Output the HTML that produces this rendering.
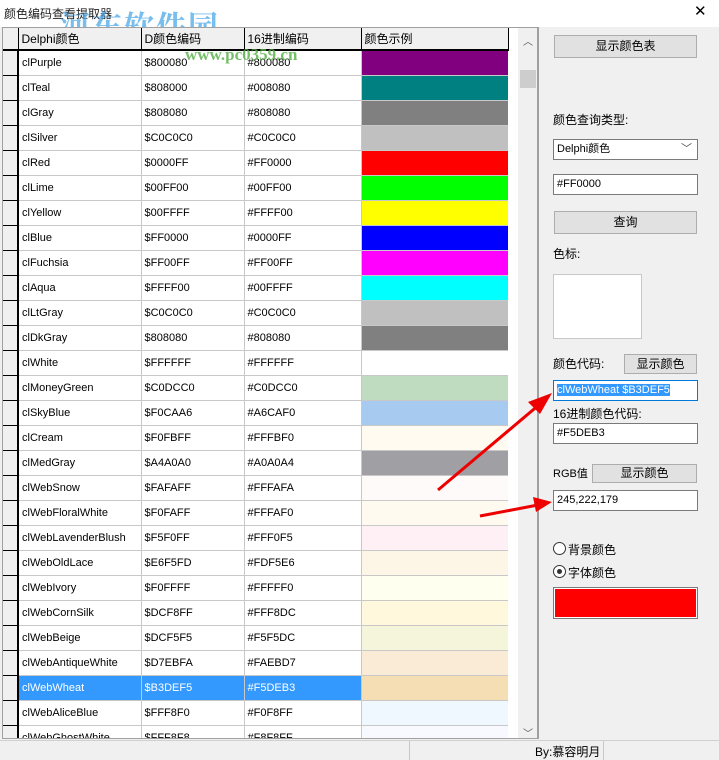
<!DOCTYPE html>
<html><head><meta charset="utf-8"><style>
*{margin:0;padding:0;box-sizing:border-box}
body{width:719px;height:760px;background:#f0f0f0;font-family:"Liberation Sans","Noto Sans CJK SC",sans-serif;font-size:11px;color:#000;position:relative;overflow:hidden}
.a{position:absolute}
#top{left:0;top:0;width:719px;height:27px;background:#fff}
#grid{left:2px;top:27px;width:536px;height:712px;border:1px solid #a0a0a0;background:#fff;overflow:hidden}
table{border-collapse:collapse;position:absolute;left:0;top:0;table-layout:fixed}
td{height:25px;border-right:1px solid #c8c8c8;border-bottom:1px solid #c8c8c8;padding:0 0 0 3px;white-space:nowrap;overflow:hidden;font-size:11px}
td.i{background:#f0f0f0;border-right:2px solid #000;border-bottom:1px solid #000;padding:0}
td.c{padding:0;border-right:none}
tr.h td{background:#f0f0f0;border-right:1px solid #000;border-bottom:2px solid #000;font-size:12px;height:22px}
tr.s td{background:#3399ff;color:#fff}
#sb{left:518px;top:28px;width:19px;height:710px;background:#f0f0f0}
.btn{position:absolute;background:#e1e1e1;border:1px solid #adadad;text-align:center;font-size:12px}
.inp{position:absolute;background:#fff;border:1px solid #7a7a7a;font-size:11px;padding-left:3px}
.lb{position:absolute;font-size:12px}
</style></head><body>
<div class="a" id="top"></div>
<div class="a" style="left:4px;top:5px;font-size:12px;color:#222">颜色编码查看提取器</div>
<div class="a" style="left:694px;top:2px;font-size:15px">✕</div>
<div class="a" style="left:60px;top:2px;font-size:30px;font-weight:bold;color:#4aa8e8;opacity:.75;font-family:'Noto Serif CJK SC',serif;letter-spacing:2px">河东软件园</div>
<div class="a" id="grid">
<table>
<colgroup><col style="width:15px"><col style="width:123px"><col style="width:103px"><col style="width:117px"><col style="width:147px"></colgroup>
<tr class="h"><td class="i" style="border-bottom:2px solid #000"></td><td>Delphi颜色</td><td>D颜色编码</td><td>16进制编码</td><td>颜色示例</td></tr>
<tr><td class="i"></td><td>clPurple</td><td>$800080</td><td>#800080</td><td class="c" style="background:#800080"></td></tr>
<tr><td class="i"></td><td>clTeal</td><td>$808000</td><td>#008080</td><td class="c" style="background:#008080"></td></tr>
<tr><td class="i"></td><td>clGray</td><td>$808080</td><td>#808080</td><td class="c" style="background:#808080"></td></tr>
<tr><td class="i"></td><td>clSilver</td><td>$C0C0C0</td><td>#C0C0C0</td><td class="c" style="background:#C0C0C0"></td></tr>
<tr><td class="i"></td><td>clRed</td><td>$0000FF</td><td>#FF0000</td><td class="c" style="background:#FF0000"></td></tr>
<tr><td class="i"></td><td>clLime</td><td>$00FF00</td><td>#00FF00</td><td class="c" style="background:#00FF00"></td></tr>
<tr><td class="i"></td><td>clYellow</td><td>$00FFFF</td><td>#FFFF00</td><td class="c" style="background:#FFFF00"></td></tr>
<tr><td class="i"></td><td>clBlue</td><td>$FF0000</td><td>#0000FF</td><td class="c" style="background:#0000FF"></td></tr>
<tr><td class="i"></td><td>clFuchsia</td><td>$FF00FF</td><td>#FF00FF</td><td class="c" style="background:#FF00FF"></td></tr>
<tr><td class="i"></td><td>clAqua</td><td>$FFFF00</td><td>#00FFFF</td><td class="c" style="background:#00FFFF"></td></tr>
<tr><td class="i"></td><td>clLtGray</td><td>$C0C0C0</td><td>#C0C0C0</td><td class="c" style="background:#C0C0C0"></td></tr>
<tr><td class="i"></td><td>clDkGray</td><td>$808080</td><td>#808080</td><td class="c" style="background:#808080"></td></tr>
<tr><td class="i"></td><td>clWhite</td><td>$FFFFFF</td><td>#FFFFFF</td><td class="c" style="background:#FFFFFF"></td></tr>
<tr><td class="i"></td><td>clMoneyGreen</td><td>$C0DCC0</td><td>#C0DCC0</td><td class="c" style="background:#C0DCC0"></td></tr>
<tr><td class="i"></td><td>clSkyBlue</td><td>$F0CAA6</td><td>#A6CAF0</td><td class="c" style="background:#A6CAF0"></td></tr>
<tr><td class="i"></td><td>clCream</td><td>$F0FBFF</td><td>#FFFBF0</td><td class="c" style="background:#FFFBF0"></td></tr>
<tr><td class="i"></td><td>clMedGray</td><td>$A4A0A0</td><td>#A0A0A4</td><td class="c" style="background:#A0A0A4"></td></tr>
<tr><td class="i"></td><td>clWebSnow</td><td>$FAFAFF</td><td>#FFFAFA</td><td class="c" style="background:#FFFAFA"></td></tr>
<tr><td class="i"></td><td>clWebFloralWhite</td><td>$F0FAFF</td><td>#FFFAF0</td><td class="c" style="background:#FFFAF0"></td></tr>
<tr><td class="i"></td><td>clWebLavenderBlush</td><td>$F5F0FF</td><td>#FFF0F5</td><td class="c" style="background:#FFF0F5"></td></tr>
<tr><td class="i"></td><td>clWebOldLace</td><td>$E6F5FD</td><td>#FDF5E6</td><td class="c" style="background:#FDF5E6"></td></tr>
<tr><td class="i"></td><td>clWebIvory</td><td>$F0FFFF</td><td>#FFFFF0</td><td class="c" style="background:#FFFFF0"></td></tr>
<tr><td class="i"></td><td>clWebCornSilk</td><td>$DCF8FF</td><td>#FFF8DC</td><td class="c" style="background:#FFF8DC"></td></tr>
<tr><td class="i"></td><td>clWebBeige</td><td>$DCF5F5</td><td>#F5F5DC</td><td class="c" style="background:#F5F5DC"></td></tr>
<tr><td class="i"></td><td>clWebAntiqueWhite</td><td>$D7EBFA</td><td>#FAEBD7</td><td class="c" style="background:#FAEBD7"></td></tr>
<tr class="s"><td class="i" style="background:#f0f0f0"></td><td>clWebWheat</td><td>$B3DEF5</td><td>#F5DEB3</td><td class="c" style="background:#F5DEB3"></td></tr>
<tr><td class="i"></td><td>clWebAliceBlue</td><td>$FFF8F0</td><td>#F0F8FF</td><td class="c" style="background:#F0F8FF"></td></tr>
<tr><td class="i"></td><td>clWebGhostWhite</td><td>$FFF8F8</td><td>#F8F8FF</td><td class="c" style="background:#F8F8FF"></td></tr>
</table>
</div>
<div class="a" id="sb"></div>
<div class="a" style="left:523px;top:33px;font-size:10px;color:#555">︿</div>
<div class="a" style="left:520px;top:70px;width:16px;height:18px;background:#cdcdcd"></div>
<div class="a" style="left:523px;top:725px;font-size:10px;color:#555">﹀</div>
<div class="a" style="left:538px;top:27px;width:1px;height:712px;background:#a0a0a0"></div>
<div class="a" style="left:0;top:740px;width:719px;height:20px;background:#f0f0f0;border-top:1px solid #d0d0d0"></div>
<div class="a" style="left:409px;top:741px;width:1px;height:19px;background:#c8c8c8"></div>
<div class="a" style="left:603px;top:741px;width:1px;height:19px;background:#c8c8c8"></div>
<div class="a" style="left:535px;top:743px;font-size:12px">By:慕容明月</div>

<div class="btn" style="left:554px;top:35px;width:143px;height:23px;line-height:21px">显示颜色表</div>
<div class="lb" style="left:553px;top:111px">颜色查询类型:</div>
<div class="inp" style="left:553px;top:139px;width:145px;height:21px;line-height:19px">Delphi颜色<span style="position:absolute;right:5px;color:#555">﹀</span></div>
<div class="inp" style="left:553px;top:174px;width:145px;height:21px;line-height:19px">#FF0000</div>
<div class="btn" style="left:554px;top:211px;width:143px;height:23px;line-height:21px">查询</div>
<div class="lb" style="left:553px;top:245px">色标:</div>
<div class="a" style="left:553px;top:274px;width:89px;height:65px;background:#fff;border:1px solid #c8c8c8"></div>
<div class="lb" style="left:553px;top:355px">颜色代码:</div>
<div class="btn" style="left:624px;top:354px;width:73px;height:20px;line-height:18px">显示颜色</div>
<div class="inp" style="left:553px;top:380px;width:145px;height:21px;line-height:19px;border-color:#0078d7"><span style="background:#3399ff;color:#fff">clWebWheat $B3DEF5</span></div>
<div class="lb" style="left:553px;top:405px">16进制颜色代码:</div>
<div class="inp" style="left:553px;top:423px;width:145px;height:21px;line-height:19px">#F5DEB3</div>
<div class="lb" style="left:553px;top:465px;font-size:11px">RGB值</div>
<div class="btn" style="left:592px;top:464px;width:105px;height:19px;line-height:17px">显示颜色</div>
<div class="inp" style="left:553px;top:490px;width:145px;height:21px;line-height:19px">245,222,179</div>
<div class="a" style="left:553px;top:542px;width:13px;height:13px;border:1px solid #333;border-radius:50%;background:#fff"></div>
<div class="lb" style="left:568px;top:541px">背景颜色</div>
<div class="a" style="left:553px;top:565px;width:13px;height:13px;border:1px solid #333;border-radius:50%;background:#fff"></div>
<div class="a" style="left:557px;top:569px;width:5px;height:5px;border-radius:50%;background:#333"></div>
<div class="lb" style="left:568px;top:564px">字体颜色</div>
<div class="a" style="left:553px;top:587px;width:145px;height:32px;background:#f00;border:1px solid #7a7a7a;box-shadow:inset 0 0 0 1px #fff"></div>

<svg class="a" style="left:0;top:0" width="719" height="760">
<g stroke="#e00" stroke-width="3" fill="#e00">
<line x1="438" y1="490" x2="540" y2="404"/>
<polygon points="552,393 528,402 540,414" stroke="none"/>
<line x1="480" y1="516" x2="538" y2="505"/>
<polygon points="552,502 533,497 536,512" stroke="none"/>
</g>
<text x="185" y="60" font-family="Liberation Serif,serif" font-weight="bold" font-size="17" fill="#55b045" opacity="0.8">www.pc0359.cn</text>
</svg>
</body></html>
